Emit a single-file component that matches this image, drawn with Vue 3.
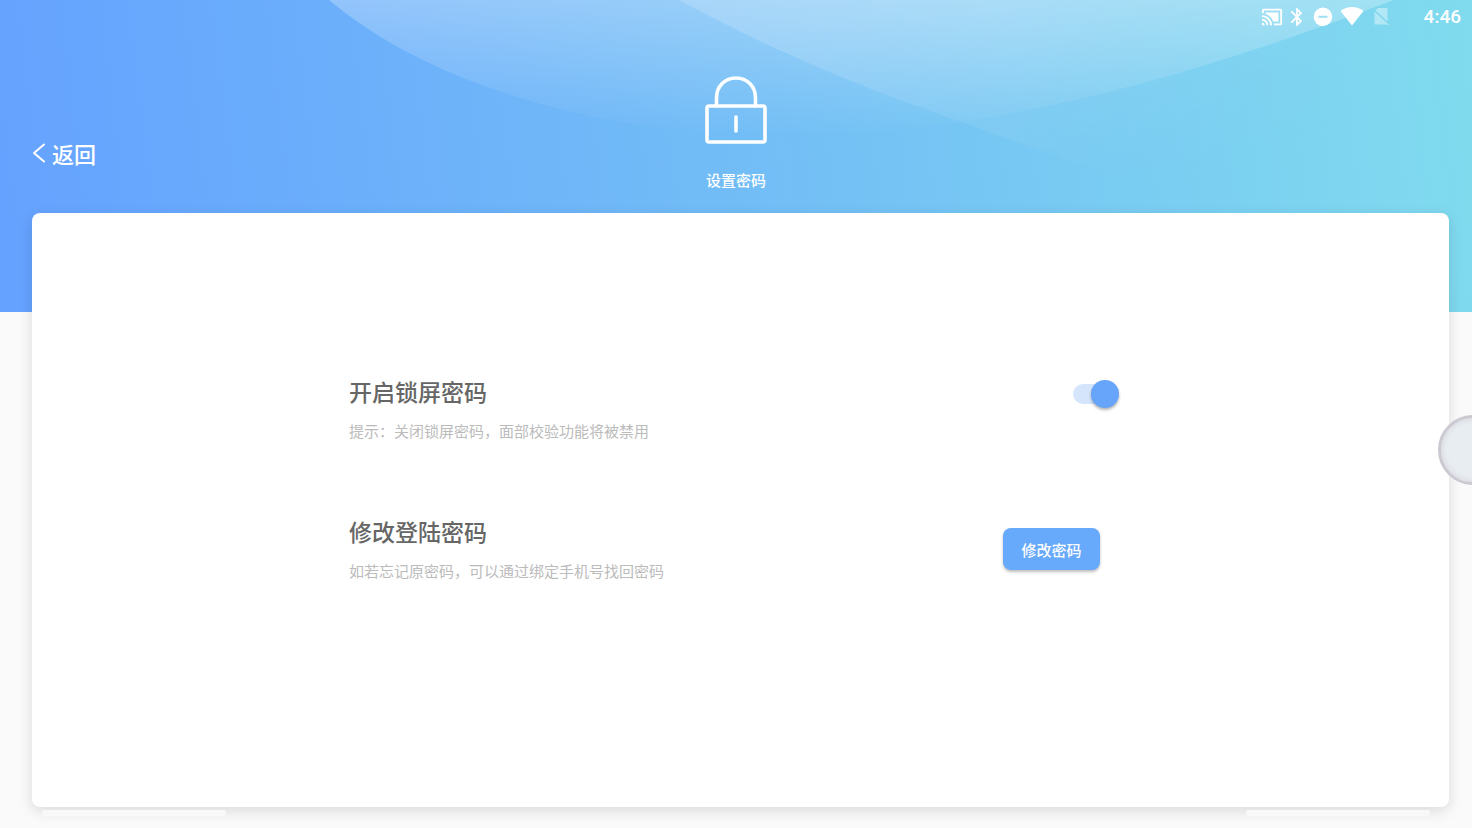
<script setup>
import { ref } from 'vue'

const lockEnabled = ref(true)
</script>

<template>
  <div class="page">
    <svg class="backdrop" viewBox="0 0 1472 312" preserveAspectRatio="none" aria-hidden="true">
      <defs>
        <linearGradient id="sky" gradientUnits="userSpaceOnUse" x1="0" y1="200" x2="1472" y2="20">
          <stop offset="0" stop-color="#65a2ff" />
          <stop offset="0.5" stop-color="#72bdf6" />
          <stop offset="1" stop-color="#80dbee" />
        </linearGradient>
        <linearGradient id="bowl" gradientUnits="userSpaceOnUse" x1="0" y1="0" x2="0" y2="136">
          <stop offset="0" stop-color="#fff" stop-opacity="0.27" />
          <stop offset="1" stop-color="#fff" stop-opacity="0" />
        </linearGradient>
        <linearGradient id="sweep" gradientUnits="userSpaceOnUse" x1="900" y1="0" x2="960" y2="230">
          <stop offset="0" stop-color="#fff" stop-opacity="0.17" />
          <stop offset="1" stop-color="#fff" stop-opacity="0" />
        </linearGradient>
        <linearGradient id="sweepFade" gradientUnits="userSpaceOnUse" x1="1000" y1="0" x2="1420" y2="0">
          <stop offset="0" stop-color="#fff" />
          <stop offset="1" stop-color="#000" />
        </linearGradient>
        <mask id="sweepMask">
          <rect width="1472" height="312" fill="url(#sweepFade)" />
        </mask>
      </defs>
      <rect width="1472" height="312" fill="url(#sky)" />
      <path d="M329 0C430 85 600 135 780 135C980 135 1170 85 1394 0Z" fill="url(#bowl)" />
      <path
        d="M679 0C790 60 890 98 971 125C1050 156 1150 190 1240 210L1472 210V0Z"
        fill="url(#sweep)"
        mask="url(#sweepMask)"
      />
    </svg>

    <div class="status">
      <svg width="22" height="22" viewBox="0 0 24 24" fill="#fff" aria-label="投屏">
        <path d="M21 3H3c-1.100 0-2 .9-2 2v3h2V5h18v14h-7v2h7c1.100 0 2-.9 2-2V5c0-1.100-.9-2-2-2zM1 18v3h3c0-1.660-1.340-3-3-3zm0-4v2c2.760 0 5 2.240 5 5h2c0-3.870-3.130-7-7-7zm0-4v2a9 9 0 0 1 9 9h2c0-6.080-4.930-11-11-11zM19 7H5v1.630c3.960 1.280 7.090 4.410 8.370 8.370H19V7z" />
      </svg>
      <svg width="20" height="22" viewBox="1 0 22 24" fill="#fff" aria-label="蓝牙">
        <path d="M17.710 7.710L12 2h-1v7.590L6.410 5 5 6.410 10.590 12 5 17.590 6.410 19 11 14.410V22h1l5.710-5.710-4.300-4.290 4.300-4.290zM13 5.830l1.880 1.880L13 9.590V5.830zm1.880 10.460L13 18.170v-3.760l1.880 1.880z" />
      </svg>
      <svg width="24" height="22" viewBox="0 0 24 22" fill="#fff" aria-label="勿扰">
        <path fill-rule="evenodd" d="M12 1.500a9.300 9.300 0 1 0 0 18.600a9.300 9.300 0 0 0 0-18.600zM7.500 9.800h9v2h-9z" />
      </svg>
      <svg width="26" height="22" viewBox="0 0 26 22" fill="#fff" aria-label="无线网络">
        <path d="M13 19.500L1.500 5Q6.500 1 13 1T24.500 5Z" />
      </svg>
      <svg width="24" height="22" viewBox="0 0 24 22" fill="#fff" fill-opacity="0.4" aria-label="无 SIM 卡">
        <path d="M9 2H18.500V15.500L6.500 4.500ZM5.500 5.500L18.500 17.500L20 18.800L19.200 19.600L18 18.600H5.500Z" />
      </svg>
      <time class="clock">4:46</time>
    </div>

    <header class="header">
      <button class="back" type="button">
        <svg width="14" height="22" viewBox="0 0 14 22" fill="none" stroke="#fff" stroke-width="2" stroke-linecap="round" stroke-linejoin="round" aria-hidden="true">
          <path d="M12 2.500L2 11L12 19.500" />
        </svg>
        <span>返回</span>
      </button>
      <div class="hero">
        <svg width="62" height="68" viewBox="0 0 62 68" fill="none" stroke="#fff" stroke-width="3.600" stroke-linecap="round" stroke-linejoin="round" aria-hidden="true">
          <rect x="2" y="30" width="58" height="36" rx="2" />
          <path d="M11.500 30V22C11.500 10 20 2 31 2S50.500 10 50.500 22V30" />
          <path d="M31 41V55" />
        </svg>
        <h1>设置密码</h1>
      </div>
    </header>

    <main class="card">
      <section class="row">
        <div class="copy">
          <label for="lock">开启锁屏密码</label>
          <p>提示：关闭锁屏密码，面部校验功能将被禁用</p>
        </div>
        <input id="lock" v-model="lockEnabled" class="switch" type="checkbox" role="switch" />
      </section>
      <section class="row row-center">
        <div class="copy">
          <h2>修改登陆密码</h2>
          <p>如若忘记原密码，可以通过绑定手机号找回密码</p>
        </div>
        <button class="primary" type="button">修改密码</button>
      </section>
    </main>

    <div class="ledge" aria-hidden="true"><i></i><i></i></div>
    <button class="assist" type="button" aria-label="悬浮按钮"></button>
  </div>
</template>

<style>
body {
  background: #fafafa;
}
</style>

<style scoped>
.page {
  position: relative;
  display: flex;
  flex-direction: column;
  min-height: 100vh;
  overflow: hidden;
  background: #fafafa;
  color: #fff;
  font-family: "Noto Sans CJK SC", "Noto Sans", sans-serif;
}

.page * {
  box-sizing: border-box;
}

button {
  padding: 0;
  border: 0;
  color: inherit;
  font: inherit;
  cursor: pointer;
}

h1,
h2,
p {
  margin: 0;
  font-weight: 400;
}

.backdrop {
  position: absolute;
  top: 0;
  left: 0;
  width: 100%;
  height: 312px;
}

.status {
  position: relative;
  display: flex;
  align-items: center;
  justify-content: flex-end;
  gap: 4px;
  height: 33px;
  padding-right: 11px;
}

.clock {
  margin-left: 27px;
  font: 500 19px/33px Roboto, sans-serif;
}

.header {
  position: relative;
  display: grid;
  grid-template-columns: 1fr auto 1fr;
  height: 180px;
  padding: 43px 32px 0;
}

.back {
  display: flex;
  align-items: center;
  align-self: start;
  justify-self: start;
  gap: 6px;
  height: 32px;
  margin-top: 61px;
  background: none;
  font-size: 22px;
  font-weight: 500;
  line-height: 32px;
}

.hero {
  display: flex;
  flex-direction: column;
  align-items: center;
  gap: 24px;
}

.hero h1 {
  font-size: 15px;
  font-weight: 500;
  line-height: 24px;
}

.card {
  position: relative;
  z-index: 1;
  flex: 1;
  display: flex;
  flex-direction: column;
  gap: 72px;
  margin: 0 23px 0 32px;
  padding: 162px 330px 64px 317px;
  border-radius: 8px;
  background: #fff;
  box-shadow: 0 4px 14px rgba(0, 0, 0, 0.13);
}

.row {
  display: flex;
  justify-content: space-between;
}

.row-center {
  align-items: center;
}

.copy {
  display: flex;
  flex-direction: column;
  gap: 12px;
}

.copy label,
.copy h2 {
  color: #666;
  font-size: 23px;
  font-weight: 500;
  line-height: 32px;
}

.copy p {
  color: #bbb;
  font-size: 15px;
  line-height: 24px;
}

.switch {
  position: relative;
  width: 46px;
  height: 28px;
  margin: 5px 0 0;
  appearance: none;
  cursor: pointer;
}

.switch::before {
  content: "";
  position: absolute;
  top: 4px;
  left: 0;
  width: 40px;
  height: 20px;
  border-radius: 10px;
  background: #e0e0e0;
}

.switch::after {
  content: "";
  position: absolute;
  top: 0;
  left: 0;
  width: 28px;
  height: 28px;
  border-radius: 50%;
  background: #fff;
  box-shadow: 0 2px 3px rgba(0, 0, 0, 0.3);
}

.switch:checked::before {
  background: #d5e6fc;
}

.switch:checked::after {
  left: 18px;
  background: #66a5f9;
}

.primary {
  width: 97px;
  height: 42px;
  margin-right: 19px;
  border-radius: 8px;
  background: #67a9fb;
  box-shadow: 0 2px 3px rgba(0, 0, 0, 0.26);
  font-size: 15px;
  font-weight: 500;
}

.ledge {
  position: relative;
  z-index: 1;
  display: flex;
  justify-content: space-between;
  height: 21px;
  padding: 3px 42px 0;
}

.ledge i {
  width: 184px;
  height: 6px;
  border-radius: 2px;
  background: #f8f8f8;
}

.assist {
  position: absolute;
  z-index: 2;
  top: 415px;
  right: -36px;
  width: 70px;
  height: 70px;
  border: 3px solid #cbcad2;
  border-radius: 50%;
  background: #e8edf1;
  box-shadow: inset 0 0 4px 2px #dcdce3;
}
</style>
